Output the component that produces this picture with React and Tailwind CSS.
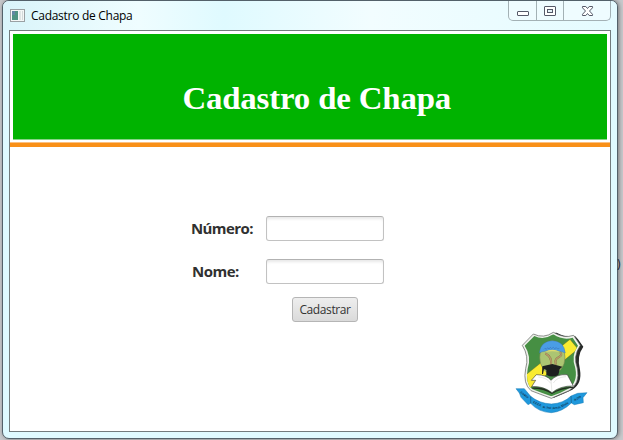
function AppIcon() {
  return (
    <svg className="h-[13px] w-[15px] shrink-0" viewBox="0 0 15 13">
      <rect x=".5" y=".5" width="14" height="12" fill="#f5f7f7" stroke="#9aa0a3" />
      <rect x="2" y="2" width="6" height="9" fill="#4f9384" />
      <rect x="2" y="2" width="3" height="4" fill="#6387a4" />
      <rect x="9" y="2" width="2" height="9" fill="#dfe5e5" />
      <rect x="12" y="2" width="1" height="9" fill="#d3dada" />
    </svg>
  );
}

function WindowControls() {
  return (
    <div className="mr-[6px] flex h-[20px] w-[103px] rounded-b-[5px] border border-t-0 border-[#a3b1b5] bg-[#effcff]">
      <div className="w-[28px] border-r border-[#a3b1b5]">
        <svg className="h-[19px] w-[27px]" viewBox="0 0 27 19">
          <rect x="8.5" y="10.5" width="11" height="4" rx=".5" fill="#fff" stroke="#555968" />
        </svg>
      </div>
      <div className="w-[27px] border-r border-[#a3b1b5]">
        <svg className="h-[19px] w-[26px]" viewBox="0 0 26 19">
          <rect x="7.5" y="5.5" width="11" height="9" rx=".5" fill="#fff" stroke="#555968" />
          <rect x="10.5" y="8.5" width="5" height="3" fill="#e5f2f8" stroke="#555968" />
        </svg>
      </div>
      <svg className="h-[19px] w-[46px]" viewBox="0 0 46 19">
        <path d="M18.5 5.5h3.3l1.7 2 1.7-2h3.3v1.3L25.5 10l3 3.3v1.2h-3.3l-1.7-2-1.7 2h-3.3v-1.2l3-3.3-3-3.2z" fill="#fff" stroke="#555968" />
      </svg>
    </div>
  );
}

function Crest() {
  return (
    <svg className="absolute bottom-[17px] right-[21px] h-[83px] w-[74px]" viewBox="30 20 222 249">
      <defs>
        <clipPath id="shield">
          <path d="M88 35Q116 49 145 30Q174 49 203 40L219 64Q197 94 211 132Q219 174 190 193Q165 207 139 216Q108 205 81 194Q60 176 68 133Q80 96 59 64Z" />
        </clipPath>
      </defs>
      <path d="M145 26L155 25Q184 41 211 36L219 45L235 67Q214 96 225 136Q232 177 202 196Q174 209 145 221Z" fill="#282a29" />
      <path d="M85 29Q116 44 145 24Q176 43 206 33L226 63Q203 96 217 132Q226 179 192 199Q165 210 139 222Q106 210 78 199Q53 178 62 133Q73 96 52 63Z" fill="#eef0eb" stroke="#555a56" strokeWidth="2" />
      <g clipPath="url(#shield)">
        <rect x="50" y="25" width="180" height="200" fill="#468f43" />
        <path d="M52 160L195 45L219 74L76 191Z" fill="#f9eb32" stroke="#485026" strokeWidth="1.2" />
      </g>
      <ellipse cx="142" cy="99" rx="38" ry="50" fill="#acc572" stroke="#6d7a48" strokeWidth="1.5" />
      <path d="M103 86Q107 50 142 49Q177 50 181 86Q168 81 164 81Q153 77 142 77Q130 77 120 81Q112 81 103 86Z" fill="#4a9de5" stroke="#3d6d99" strokeWidth="1" />
      <path d="M120 83Q142 70 164 83Q142 79 120 83Z" fill="#dfdc72" />
      <path d="M121 87Q142 98 138 121M165 84Q175 92 160 99Q147 106 153 121" fill="none" stroke="#8b7045" strokeWidth="6" />
      <path d="M121 87Q142 98 138 121M165 84Q175 92 160 99Q147 106 153 121" fill="none" stroke="#b59b6a" strokeWidth="4.5" />
      <path d="M117 75l3-3 4 3 4-5 4 4 4-5 4 4 5-4 4 4 5-3 4 4 5-2" fill="none" stroke="#3568b3" strokeWidth="1.5" />
      <path d="M79 168L94 151Q125 151 138 168Q154 149 187 151L205 185Q166 184 141 205Q114 184 80 187L92 168Z" fill="#fff" stroke="#353735" strokeWidth="1.8" />
      <path d="M81 190Q117 187 141 206Q168 187 204 187L207 190Q167 192 141 209Q116 193 83 193Z" fill="#242a22" />
      <path d="M138 168L141 205M100 158Q125 159 137 177M145 176Q156 158 183 157" fill="none" stroke="#b5b8b3" strokeWidth="1" />
      <path d="M112 126L142 119L172 127L164 135L160 152Q141 162 124 151V137L117 134L114 149H111Z" fill="#1d201f" />
      <path d="M33 193L58 193L77 216Q102 237 139 239Q176 237 198 215L218 207L246 205L234 220L235 235L208 241L199 236Q173 262 139 265Q101 264 77 237L69 241L48 219L43 206Z" fill="#1f98dc" stroke="#177bb4" strokeWidth="1.5" />
      <path d="M77 216L77 237M198 215L199 236" stroke="#155b84" strokeWidth="2" />
      <g className="font-['Liberation_Sans'] font-bold" fill="#0d2338" fontSize="9">
        <text transform="translate(45 205) rotate(36)" textLength="29" lengthAdjust="spacingAndGlyphs">13 de Março</text>
        <text transform="translate(84 235) rotate(27)" textLength="26" lengthAdjust="spacingAndGlyphs">E.E.E.P.</text>
        <text transform="translate(113 251) rotate(6)" textLength="26" lengthAdjust="spacingAndGlyphs">Dr. José</text>
        <text transform="translate(143 255) rotate(-9)" textLength="24" lengthAdjust="spacingAndGlyphs">Alves da</text>
        <text transform="translate(170 249) rotate(-28)" textLength="24" lengthAdjust="spacingAndGlyphs">Silveira</text>
        <text transform="translate(209 230) rotate(-28)" textLength="22" lengthAdjust="spacingAndGlyphs">de 2009</text>
      </g>
    </svg>
  );
}

function Field({ label, className, labelClass }) {
  return (
    <label className={`flex h-[25px] items-center ${className}`}>
      <span className={`w-[75px] text-[15px] font-bold leading-[25px] text-[#303030] ${labelClass}`}>{label}</span>
      <input className="h-[25px] w-[118px] rounded-[3px] border border-[#c2c2c2] border-t-[#b2b2b2] bg-white px-2 text-[12px] shadow-[inset_0_3px_3px_-1px_#e8e8e8] outline-none" />
    </label>
  );
}

export default function App() {
  return (
    <div className="relative h-[440px] w-[623px] overflow-hidden bg-[#c7c9cc] font-['Open_Sans','Noto_Sans',sans-serif]">
      <div className="absolute left-[617px] top-[257px] text-[12px] leading-[14px] text-[#202630]">)</div>
      <div className="ml-[2px] h-[439px] w-[616px] rounded-[7px] border border-[#53616a] bg-[#dffaff] shadow-[1px_0_4px_#777]">
        <header className="flex h-[29px] justify-between rounded-t-[6px] bg-[linear-gradient(90deg,#d9f4fa,#effdff_22%,#dffaff_36%,#f2fdff_60%,#e4fbff)]">
          <div className="flex items-center gap-[6px] pl-[7px]">
            <AppIcon />
            <h2 className="pt-px text-[12px] leading-[20px] tracking-[-0.28px] text-black">Cadastro de Chapa</h2>
          </div>
          <WindowControls />
        </header>
        <main className="relative ml-[6px] h-[402px] w-[602px] border border-[#727b7d] bg-white pt-[3px]">
          <div className="ml-[3px] flex h-[106px] w-[594px] justify-center border-b border-b-[#86d386] bg-[#00b300] pt-[45px]">
            <h1 className="ml-[13px] origin-center scale-x-[1.06] whitespace-nowrap font-['Liberation_Serif',serif] text-[31px] font-bold leading-[40px] tracking-[-0.15px] text-white">Cadastro de Chapa</h1>
          </div>
          <div className="mt-[2px] h-[5px] border-t border-[#fbc080] bg-[#f99018]" />
          <form className="flex flex-col pl-[181px] pt-[69px]" onSubmit={(event) => event.preventDefault()}>
            <Field label="Número:" className="" labelClass="tracking-[-0.6px]" />
            <Field label="Nome:" className="mt-[18px]" labelClass="pl-px tracking-[-0.5px]" />
            <button className="ml-[101px] mt-[13px] h-[25px] w-[66px] rounded-[3px] border border-[#b5b5b5] bg-linear-to-b from-[#eeeeee] to-[#dadada] text-[12px] leading-[22px] tracking-[-0.4px] text-[#333]">Cadastrar</button>
          </form>
          <Crest />
        </main>
      </div>
    </div>
  );
}
